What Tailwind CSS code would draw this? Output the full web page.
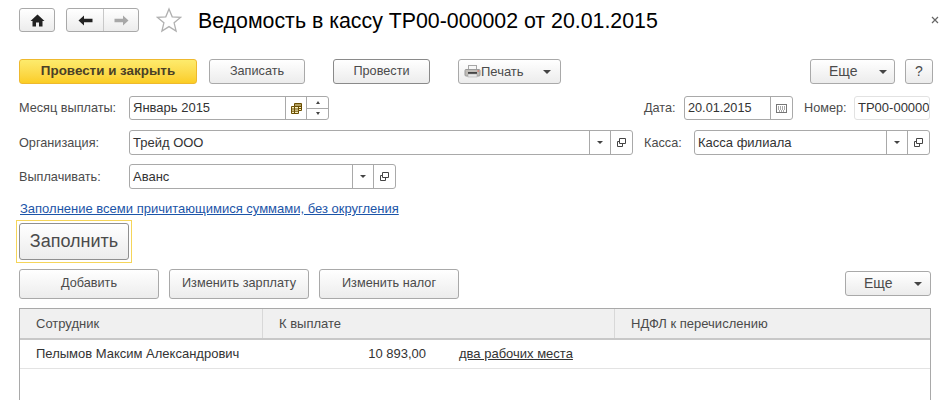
<!DOCTYPE html>
<html lang="ru">
  <head>
    <meta charset="UTF-8" />
    <title>Ведомость в кассу</title>
    <script src="https://cdn.jsdelivr.net/npm/@tailwindcss/browser@4"></script>
  </head>
  <body class="relative h-[400px] w-[952px] overflow-hidden bg-white font-['Liberation_Sans',Arial,sans-serif] text-[13px] text-[#4b4b4b]">
    <!-- Title bar -->
    <div class="mt-[8px] flex h-[24px] items-center pl-[19px]">
      <button class="flex h-[24px] w-[36px] items-center justify-center rounded-[3px] border border-[#a9a9a9] bg-gradient-to-b from-white to-[#ececec]">
        <svg width="15" height="13" viewBox="0 0 15 13"><path d="M7.5 0.5 L14.5 7 H12.5 V12.5 H9 V8.5 H6 V12.5 H2.5 V7 H0.5 Z" fill="#222" /></svg>
      </button>
      <div class="ml-[11px] flex h-[24px] w-[73px] rounded-[3px] border border-[#a9a9a9] bg-gradient-to-b from-white to-[#ececec]">
        <div class="flex w-[37px] items-center justify-center border-r border-[#c8c8c8]">
          <svg width="15" height="11" viewBox="0 0 15 11"><path d="M0.5 5.5 L6 0.5 V3.8 H14.5 V7.2 H6 V10.5 Z" fill="#222" /></svg>
        </div>
        <div class="flex flex-1 items-center justify-center">
          <svg width="15" height="11" viewBox="0 0 15 11"><path d="M14.5 5.5 L9 0.5 V3.8 H0.5 V7.2 H9 V10.5 Z" fill="#a8a8a8" /></svg>
        </div>
      </div>
      <svg class="ml-[17px]" width="26" height="26" viewBox="0 0 26 26"><path d="M13 2 L16.2 9.8 L24.5 10.4 L18.1 15.8 L20.1 24 L13 19.6 L5.9 24 L7.9 15.8 L1.5 10.4 L9.8 9.8 Z" fill="none" stroke="#b0b0b0" stroke-width="1.3" /></svg>
      <h1 class="ml-[16px] mt-[1px] text-[21.33px] leading-[24px] text-black">Ведомость в кассу ТР00-000002 от 20.01.2015</h1>
      <svg class="absolute left-[931px] top-[16px]" width="8" height="8" viewBox="0 0 8 8"><path d="M1 1 L7 7 M7 1 L1 7" stroke="#666" stroke-width="1.2" /></svg>
    </div>

    <!-- Command bar -->
    <div class="mt-[27px] flex h-[25px] pl-[19px]">
      <button class="w-[178px] rounded-[3px] border border-[#eeb92e] bg-gradient-to-b from-[#fdeb6c] to-[#fbcd22] text-[13.4px] font-bold text-[#4a4026]">Провести и закрыть</button>
      <button class="ml-[12px] w-[96px] rounded-[3px] border border-[#a9a9a9] bg-gradient-to-b from-white to-[#ececec] text-[12.7px]">Записать</button>
      <button class="ml-[28px] w-[97px] rounded-[3px] border border-[#8a8a8a] bg-gradient-to-b from-white to-[#ececec] text-[12.7px]">Провести</button>
      <button class="ml-[28px] flex w-[103px] items-center rounded-[3px] border border-[#a9a9a9] bg-gradient-to-b from-white to-[#ececec] pl-[5px]">
        <svg width="17" height="15" viewBox="0 0 17 15">
          <rect x="4.5" y="1.5" width="8" height="4" fill="#f6f6f6" stroke="#a5a5a5" />
          <rect x="1" y="5.5" width="15" height="6.5" rx="1" fill="#c0bdb8" stroke="#9a9a9a" />
          <rect x="4" y="8" width="9" height="2" fill="#444" />
          <rect x="4" y="10" width="9" height="3" fill="#e8e8e8" stroke="#a5a5a5" stroke-width="0.5" />
          <rect x="13.5" y="6.5" width="1.5" height="1" fill="#e0584a" />
        </svg>
        <span>Печать</span>
        <span class="ml-[19px] h-0 w-0 border-x-[4px] border-t-[4px] border-x-transparent border-t-[#444]"></span>
      </button>
      <button class="ml-[249px] flex w-[85px] items-center rounded-[3px] border border-[#a9a9a9] bg-gradient-to-b from-white to-[#ececec] pl-[18px]">
        <span class="text-[14px]">Еще</span>
        <span class="ml-[21px] h-0 w-0 border-x-[4px] border-t-[4px] border-x-transparent border-t-[#444]"></span>
      </button>
      <button class="ml-[10px] w-[28px] rounded-[3px] border border-[#a9a9a9] bg-gradient-to-b from-white to-[#ececec] text-[14px]">?</button>
    </div>

    <!-- Month / date / number -->
    <div class="mt-[12px] flex h-[24px] items-center pl-[19px]">
      <label class="mt-[2px] w-[110px] text-[12.7px]">Месяц выплаты:</label>
      <div class="flex h-[24px] w-[200px] rounded-[3px] border border-[#a9a9a9] text-[#333]">
        <span class="flex-1 pl-[3px] leading-[22px]">Январь 2015</span>
        <span class="flex w-[21px] items-center justify-center border-l border-[#a9a9a9]">
          <svg width="11" height="11" viewBox="0 0 11 11"><path d="M3.5 0.5 H10.5 V7.5 H7.5 V10.5 H0.5 V3.5 H3.5 Z" fill="#f8efc0" stroke="#6b4e00" /><path d="M0.5 6 H7.5 M0.5 8.2 H7.5 M3.5 3.5 H10.5 M3.5 3.5 V10.5 M7.5 3.5 V7.5 M3.5 2 H10.5 M7.5 5.5 H10.5" fill="none" stroke="#6b4e00" /></svg>
        </span>
        <span class="flex w-[22px] flex-col border-l border-[#a9a9a9]">
          <span class="flex flex-1 items-center justify-center border-b border-[#a9a9a9]"><span class="h-0 w-0 border-x-[2.5px] border-b-[3px] border-x-transparent border-b-[#444]"></span></span>
          <span class="flex flex-1 items-center justify-center"><span class="h-0 w-0 border-x-[2.5px] border-t-[3px] border-x-transparent border-t-[#444]"></span></span>
        </span>
      </div>
      <label class="ml-[315px] mt-[2px] w-[40px] text-[12.7px]">Дата:</label>
      <div class="flex h-[24px] w-[109px] rounded-[3px] border border-[#a9a9a9] text-[#333]">
        <span class="flex-1 pl-[3px] text-[12.7px] leading-[22px]">20.01.2015</span>
        <span class="flex w-[22px] items-center justify-center border-l border-[#a9a9a9]">
          <svg width="11" height="9" viewBox="0 0 11 9"><rect x="0.5" y="0.5" width="10" height="8" fill="#fff" stroke="#777" /><path d="M2 3 H9 M2 5 H9 M3 7 H8" stroke="#555" stroke-dasharray="1 1" /></svg>
        </span>
      </div>
      <label class="ml-[11px] mt-[2px] w-[50px] text-[12.7px]">Номер:</label>
      <div class="h-[24px] w-[76px] overflow-hidden whitespace-nowrap rounded-[3px] border border-[#e2e2e2] pl-[3px] leading-[22px] text-[#333]">ТР00-00000</div>
    </div>

    <!-- Organization / cash -->
    <div class="mt-[10px] flex h-[25px] items-center pl-[19px]">
      <label class="mt-[2px] w-[110px] text-[12.7px]">Организация:</label>
      <div class="flex h-[25px] w-[504px] rounded-[3px] border border-[#a9a9a9] text-[#333]">
        <span class="flex-1 pl-[3px] leading-[23px]">Трейд ООО</span>
        <span class="flex w-[21px] items-center justify-center border-l border-[#a9a9a9]"><span class="h-0 w-0 border-x-[3px] border-t-[3px] border-x-transparent border-t-[#444]"></span></span>
        <span class="flex w-[22px] items-center justify-center border-l border-[#a9a9a9]">
          <svg width="9" height="9" viewBox="0 0 9 9"><path d="M2.5 0.5 H8.5 V5.5 H2.5 Z M2.5 3.5 H0.5 V8.5 H5.5 V5.5" fill="none" stroke="#444" /></svg>
        </span>
      </div>
      <label class="ml-[11px] mt-[2px] w-[50px] text-[12.7px]">Касса:</label>
      <div class="flex h-[25px] w-[236px] rounded-[3px] border border-[#a9a9a9] text-[#333]">
        <span class="flex-1 pl-[3px] leading-[23px]">Касса филиала</span>
        <span class="flex w-[21px] items-center justify-center border-l border-[#a9a9a9]"><span class="h-0 w-0 border-x-[3px] border-t-[3px] border-x-transparent border-t-[#444]"></span></span>
        <span class="flex w-[22px] items-center justify-center border-l border-[#a9a9a9]">
          <svg width="9" height="9" viewBox="0 0 9 9"><path d="M2.5 0.5 H8.5 V5.5 H2.5 Z M2.5 3.5 H0.5 V8.5 H5.5 V5.5" fill="none" stroke="#444" /></svg>
        </span>
      </div>
    </div>

    <!-- Pay type -->
    <div class="mt-[9px] flex h-[25px] items-center pl-[19px]">
      <label class="mt-[2px] w-[110px] text-[12.7px]">Выплачивать:</label>
      <div class="flex h-[25px] w-[267px] rounded-[3px] border border-[#a9a9a9] text-[#333]">
        <span class="flex-1 pl-[3px] leading-[23px]">Аванс</span>
        <span class="flex w-[21px] items-center justify-center border-l border-[#a9a9a9]"><span class="h-0 w-0 border-x-[3px] border-t-[3px] border-x-transparent border-t-[#444]"></span></span>
        <span class="flex w-[22px] items-center justify-center border-l border-[#a9a9a9]">
          <svg width="9" height="9" viewBox="0 0 9 9"><path d="M2.5 0.5 H8.5 V5.5 H2.5 Z M2.5 3.5 H0.5 V8.5 H5.5 V5.5" fill="none" stroke="#444" /></svg>
        </span>
      </div>
    </div>

    <!-- Fill settings link -->
    <a class="ml-[20px] mt-[13px] block h-[14px] leading-[14px] text-[#1c55a8] underline">Заполнение всеми причитающимися суммами, без округления</a>

    <!-- Fill button -->
    <div class="ml-[16px] mt-[4px] h-[43px] w-[116px] border border-[#f5d55a] p-[2px]">
      <button class="h-full w-full rounded-[3px] border border-[#8f8f8f] bg-gradient-to-b from-white to-[#ececec] text-[18px]">Заполнить</button>
    </div>

    <!-- Table commands -->
    <div class="mt-[6px] flex h-[30px] pl-[19px]">
      <button class="w-[140px] rounded-[3px] border border-[#a9a9a9] bg-gradient-to-b from-white to-[#ececec] text-[12.7px]">Добавить</button>
      <button class="ml-[10px] w-[140px] rounded-[3px] border border-[#a9a9a9] bg-gradient-to-b from-white to-[#ececec] text-[12.7px]">Изменить зарплату</button>
      <button class="ml-[10px] w-[140px] rounded-[3px] border border-[#a9a9a9] bg-gradient-to-b from-white to-[#ececec] text-[12.7px]">Изменить налог</button>
      <button class="ml-[386px] mt-[2px] flex h-[25px] w-[86px] items-center rounded-[3px] border border-[#a9a9a9] bg-gradient-to-b from-white to-[#ececec] pl-[18px]">
        <span class="text-[14px]">Еще</span>
        <span class="ml-[21px] h-0 w-0 border-x-[4px] border-t-[4px] border-x-transparent border-t-[#444]"></span>
      </button>
    </div>

    <!-- Table -->
    <div class="ml-[19px] mt-[9px] h-[92px] w-[912px] border border-b-0 border-[#a9a9a9]">
      <div class="flex h-[31px] items-center border-b-2 border-[#c8c8c8] bg-[#f0f0f0]">
        <div class="flex h-full w-[243px] items-center border-r border-[#d8d8d8] pl-[16px]">Сотрудник</div>
        <div class="flex h-full w-[352px] items-center border-r border-[#d8d8d8] pl-[16px]">К выплате</div>
        <div class="flex h-full flex-1 items-center pl-[16px]">НДФЛ к перечислению</div>
      </div>
      <div class="flex h-[29px] items-center border-b border-[#e3e3e3] text-[#333]">
        <div class="w-[243px] pl-[16px]">Пелымов Максим Александрович</div>
        <div class="w-[163px] text-right">10 893,00</div>
        <a class="ml-[33px] text-[#333] underline">два рабочих места</a>
      </div>
    </div>
  </body>
</html>
